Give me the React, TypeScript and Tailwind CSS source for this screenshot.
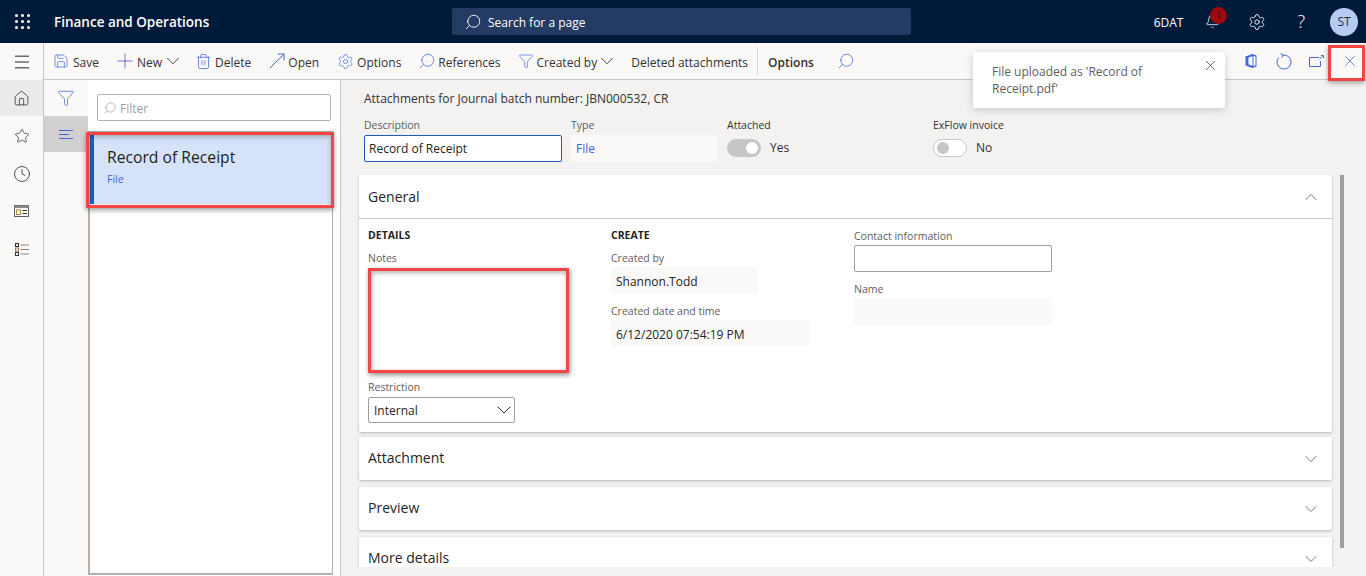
import React from "react";
import {
  Save,
  Plus,
  ChevronDown,
  ChevronUp,
  Trash2,
  MoveUpRight,
  Settings,
  Search,
  Funnel,
  Home,
  Star,
  Clock,
  X,
  Bell,
  Menu,
} from "lucide-react";

const BLUE = "#4468d8";

function Tool({ icon, label, chevron, bold, gap = "gap-[6px]" }: { icon?: React.ReactNode; label: string; chevron?: boolean; bold?: boolean; gap?: string }) {
  return (
    <div className={`flex items-center h-full px-[9.5px] shrink-0 ${gap}`}>
      {icon}
      <span className={`pt-[3px] ${bold ? "font-semibold" : ""}`}>{label}</span>
      {chevron && (
        <span className="w-[11px] flex justify-center ml-0">
          <ChevronDown size={22} strokeWidth={1} className="shrink-0 text-[#323130]" />
        </span>
      )}
    </div>
  );
}

function Label({ children, dark }: { children: React.ReactNode; dark?: boolean }) {
  return <div className={`text-[10.5px] leading-[15px] h-[15px] ${dark ? "text-[#323130]" : "text-[#605e5c]"}`}>{children}</div>;
}

function Collapsed({ title }: { title: string }) {
  return (
    <div className="h-[43px] shrink-0 bg-white rounded-[2px] shadow-[0_1px_3px_rgba(0,0,0,0.25)] flex items-center justify-between pl-[9px] pr-[11px] mb-[7px]">
      <span className="text-[14px] font-medium text-[#252423] pb-[2px]">{title}</span>
      <ChevronDown size={20} strokeWidth={1} className="text-[#605e5c]" />
    </div>
  );
}

function Toggle({ on, label }: { on: boolean; label: string }) {
  return (
    <div className="flex items-center gap-[9px] h-[27px] mt-[1px]">
      <div className={`w-[34px] h-[18px] rounded-full flex items-center px-[3px] ${on ? "bg-[#c8c6c4] justify-end" : "bg-white border border-[#c8c6c4] justify-start"}`}>
        <div className={`w-[12px] h-[12px] rounded-full ${on ? "bg-white" : "bg-[#c8c6c4]"}`} />
      </div>
      <span className="text-[12px] text-[#323130]">{label}</span>
    </div>
  );
}

function OfficeIcon() {
  return (
    <svg width="14" height="16" viewBox="0 0 14 16" fill="none">
      <path d="M1.5 3.5 8.5 1 12.5 2.5V13.5L8.5 15 1.5 12.5Z" fill={BLUE} />
      <path d="M4.5 4.5 8.5 3.2V12.8L4.5 11.5Z" fill="#fff" />
      <path d="M9.5 3 11.5 3.5V12.5L9.5 13Z" fill="#fff" />
    </svg>
  );
}

function RefreshIcon() {
  return (
    <svg width="16" height="17" viewBox="0 0 16 17" fill="none" stroke={BLUE} strokeWidth="1">
      <path d="M7 2.1A7 7 0 1 1 2.6 4.6" />
      <path d="M4.5 .5 7.2 2.1 5.8 4.6" />
    </svg>
  );
}

function PopoutIcon() {
  return (
    <svg width="15" height="12" viewBox="0 0 15 12" fill="none" stroke={BLUE} strokeWidth="1">
      <path d="M10 2.5H.5v9h11V6" />
      <path d="M10.5 4 13.5 1.5" />
      <path d="M12 .5h2.5V3" />
    </svg>
  );
}

function WorkspaceIcon() {
  return (
    <svg width="15" height="12" viewBox="0 0 15 12" fill="none">
      <rect x=".5" y=".5" width="14" height="11" stroke="#605e5c" />
      <rect x=".5" y=".5" width="14" height="2.5" fill="#8a8886" />
      <rect x="2.5" y="5" width="4" height="4.5" stroke="#b08a4a" />
      <path d="M8.5 5.5H13M8.5 8.5H13" stroke="#323130" />
    </svg>
  );
}

function ListIcon() {
  return (
    <svg width="14" height="13" viewBox="0 0 14 13" fill="none" stroke="#323130">
      <rect x=".5" y=".5" width="3" height="3" />
      <rect x=".5" y="5" width="3" height="3" stroke="#a07a3a" />
      <rect x=".5" y="9.5" width="3" height="3" />
      <path d="M5.5 2H14M5.5 6.5H14M5.5 11H14" stroke="#8a8886" />
    </svg>
  );
}

function WaffleIcon() {
  return (
    <div className="grid grid-cols-3 gap-[3px] w-[15px]">
      {[0, 1, 2, 3, 4, 5, 6, 7, 8].map((i) => (
        <div key={i} className="w-[3px] h-[3px] bg-white rounded-full" />
      ))}
    </div>
  );
}

export default function App() {
  return (
    <div className="relative w-[1366px] h-[576px] overflow-hidden flex flex-col bg-[#f3f2f1] font-['Open_Sans',sans-serif] text-[#252423]">
      {/* top bar */}
      <header className="h-[43px] shrink-0 bg-[#001a3a] flex items-center text-white">
        <div className="w-[44px] flex justify-center"><WaffleIcon /></div>
        <div className="w-[408px] pl-[10px] pt-[2px] text-[13.5px] font-semibold">Finance and Operations</div>
        <div className="w-[459px] h-[27px] bg-[#243c63] rounded-[2px] flex items-center pl-[12px] gap-[6px] text-[12px]">
          <Search size={18} strokeWidth={1.2} className="-scale-x-100" />
          <span className="pt-[3px]">Search for a page</span>
        </div>
        <div className="ml-auto flex items-center pr-[8px]">
          <span className="text-[12px] mr-[22px] pt-[2px]">6DAT</span>
          <div className="relative w-[16px] h-[16px] mr-[27px]">
            <Bell size={15} strokeWidth={1.2} />
            <div className="absolute -top-[7px] left-[5px] w-[17px] h-[17px] rounded-full bg-[#9c0a12] text-[10px] text-[#3b0d10] flex items-center justify-center">1</div>
          </div>
          <Settings size={18} strokeWidth={1.2} className="mr-[31px]" />
          <span className="text-[18px] font-light mr-[25px]">?</span>
          <div className="w-[28px] h-[28px] rounded-full bg-[#b7cbf2] text-[#1f2a44] text-[12px] flex items-center justify-center">ST</div>
        </div>
      </header>

      <div className="flex flex-1 min-h-0">
        {/* nav rail */}
        <nav className="w-[44px] shrink-0 bg-[#faf9f8] border-r border-[#c8c6c4] flex flex-col items-stretch">
          <div className="h-[37px] flex items-center justify-center"><Menu size={20} strokeWidth={1.2} className="text-[#252423]" /></div>
          <div className="h-[36px] bg-[#edebe9] flex items-center justify-center"><Home size={17} strokeWidth={1.1} className="text-[#323130]" /></div>
          <div className="h-[40px] flex items-center justify-center"><Star size={16} strokeWidth={1.1} className="text-[#323130]" /></div>
          <div className="h-[36px] flex items-center justify-center"><Clock size={18} strokeWidth={1.1} className="text-[#323130]" /></div>
          <div className="h-[38px] flex items-center justify-center"><WorkspaceIcon /></div>
          <div className="h-[38px] flex items-center justify-center"><ListIcon /></div>
        </nav>

        <div className="flex-1 min-w-0 flex flex-col">
          {/* action pane */}
          <div className="h-[37px] shrink-0 bg-[#faf9f8] border-b border-[#c8c6c4] flex items-center pl-[1.5px] text-[12px] text-[#323130]">
            <Tool icon={<span className="w-[12px] flex justify-center"><Save size={16} strokeWidth={1.1} color={BLUE} className="shrink-0" /></span>} label="Save" />
            <Tool gap="gap-[5px]" icon={<span className="w-[14px] flex justify-center"><Plus size={24} strokeWidth={1} color="#7a6fd0" className="shrink-0" /></span>} label="New" chevron />
            <Tool icon={<span className="w-[12px] flex justify-center"><Trash2 size={17} strokeWidth={1.1} color={BLUE} className="shrink-0" /></span>} label="Delete" />
            <Tool gap="gap-[4px]" icon={<span className="w-[14px] flex justify-center"><MoveUpRight size={24} strokeWidth={1} color={BLUE} className="shrink-0" /></span>} label="Open" />
            <Tool gap="gap-[5px]" icon={<span className="w-[14px] flex justify-center"><Settings size={17} strokeWidth={1} color={BLUE} className="shrink-0" /></span>} label="Options" />
            <Tool gap="gap-[4px]" icon={<span className="w-[14px] flex justify-center"><Search size={18} strokeWidth={1} color={BLUE} className="-scale-x-100 shrink-0" /></span>} label="References" />
            <Tool gap="gap-[4px]" icon={<span className="w-[13px] flex justify-center"><Funnel size={16} strokeWidth={1} color={BLUE} className="shrink-0" /></span>} label="Created by" chevron />
            <Tool label="Deleted attachments" />
            <div className="w-px h-[28px] bg-[#d2d0ce] mx-[-1px]" />
            <div className="w-[2px]" />
            <Tool label="Options" bold />
            <Search size={18} strokeWidth={1} color={BLUE} className="-scale-x-100 ml-[14px]" />
            <div className="ml-auto flex items-center">
              <div className="w-[33px] flex justify-center"><OfficeIcon /></div>
              <div className="w-[33px] flex justify-center"><RefreshIcon /></div>
              <div className="w-[33px] flex justify-center"><PopoutIcon /></div>
              <div className="w-[33px] flex justify-center"><X size={18} strokeWidth={1} color={BLUE} /></div>
            </div>
          </div>

          <div className="flex flex-1 min-h-0">
            {/* filter pane tabs */}
            <div className="w-[44px] shrink-0 bg-[#faf9f8] flex flex-col">
              <div className="h-[36px] flex items-center justify-center"><Funnel size={18} strokeWidth={1} color={BLUE} /></div>
              <div className="h-[36px] bg-[#d2d0ce] flex items-center justify-center">
                <svg width="15" height="11" viewBox="0 0 15 11" stroke={BLUE} strokeWidth="1"><path d="M0 1.5H14M0 5.5H10M0 9.5H14" /></svg>
              </div>
            </div>

            {/* list */}
            <aside className="w-[253px] shrink-0 bg-white border-r border-[#c8c6c4] flex flex-col pb-px">
              <div className="pl-[9px] pr-[9px] pt-[14px] pb-[10px]">
                <div className="h-[27px] border border-[#b3b0ad] rounded-[2px] flex items-center pl-[5px] gap-[3px] text-[12px] text-[#a19f9d]">
                  <Search size={14} strokeWidth={1} className="-scale-x-100 text-[#8a8886]" />
                  <span className="pt-[2px]">Filter</span>
                </div>
              </div>
              <div className="flex-1 mr-[7px] border-2 border-r border-t border-[#b3b0ad] border-l-[#b3b0ad] pt-[2px]">
                <div className="h-[70px] bg-[#d5e2f8] border-l-4 border-[#1f5bc4] pl-[13px] pt-[13px]">
                  <div className="text-[15.7px] leading-[20px] font-medium text-[#201f1e]">Record of Receipt</div>
                  <div className="text-[10.5px] leading-[14px] mt-[5px] text-[#3f63d6]">File</div>
                </div>
              </div>
            </aside>

            {/* details */}
            <main className="flex-1 min-w-0 relative pl-[18px] pr-[34px] pb-[9px] flex flex-col overflow-hidden">
              <div className="pl-[5px] h-[38px] pt-[11px] text-[12px] leading-[16px] text-[#323130]">Attachments for Journal batch number: JBN000532, CR</div>
              <div className="pl-[5px] h-[57px] flex shrink-0">
                <div className="w-[207px]">
                  <Label>Description</Label>
                  <div className="w-[198px] h-[27px] mt-[2px] bg-white border border-[#1f5bc4] rounded-[2px] px-[4px] flex items-center text-[12px]">Record of Receipt</div>
                </div>
                <div className="w-[156px]">
                  <Label>Type</Label>
                  <div className="w-[146px] h-[27px] mt-[2px] bg-[#faf9f8] px-[5px] flex items-center text-[12px] text-[#3f63d6]">File</div>
                </div>
                <div className="w-[206px]">
                  <Label dark>Attached</Label>
                  <Toggle on label="Yes" />
                </div>
                <div>
                  <Label dark>ExFlow invoice</Label>
                  <Toggle on={false} label="No" />
                </div>
              </div>

              <div className="flex-1 min-h-0 overflow-hidden -mx-[4px] px-[4px]">
                <div className="h-[257px] bg-white rounded-[2px] shadow-[0_1px_3px_rgba(0,0,0,0.25)] mb-[5px]">
                  <div className="h-[44px] border-b border-[#c8c6c4] flex items-center justify-between pl-[9px] pr-[11px]">
                    <span className="text-[14px] font-medium text-[#252423]">General</span>
                    <ChevronUp size={20} strokeWidth={1} className="text-[#605e5c]" />
                  </div>
                  <div className="flex pl-[9px] pt-[9px]">
                    <div className="w-[243px]">
                      <div className="text-[10.5px] leading-[15px] font-bold text-[#252423]">DETAILS</div>
                      <div className="mt-[8px]"><Label>Notes</Label></div>
                      <div className="w-[201px] h-[105px] mt-[2px] bg-white border-[3px] border-[#f44545] shadow-[1px_2px_5px_rgba(0,0,0,0.45),inset_1px_2px_5px_rgba(0,0,0,0.3)]" />
                      <div className="mt-[7px]"><Label>Restriction</Label></div>
                      <div className="w-[147px] h-[26px] mt-[2px] border border-[#a19f9d] rounded-[2px] flex items-center justify-between pl-[5px] text-[12px] text-[#252423]">
                        <span className="pt-px">Internal</span>
                        <ChevronDown size={24} strokeWidth={1} className="text-[#323130] -mr-[2px]" />
                      </div>
                    </div>
                    <div className="w-[243px]">
                      <div className="text-[10.5px] leading-[15px] font-bold text-[#252423]">CREATE</div>
                      <div className="mt-[8px]"><Label>Created by</Label></div>
                      <div className="w-[147px] h-[27px] mt-px bg-[#faf9f8] pl-[5px] pt-[2px] flex items-center text-[12px]">Shannon.Todd</div>
                      <div className="mt-[10px]"><Label>Created date and time</Label></div>
                      <div className="w-[198px] h-[27px] mt-px bg-[#faf9f8] pl-[5px] pt-[2px] flex items-center text-[12px]">6/12/2020 07:54:19 PM</div>
                    </div>
                    <div className="w-[198px] pt-px">
                      <Label>Contact information</Label>
                      <div className="h-[27px] mt-px bg-white border border-[#a19f9d] rounded-[2px]" />
                      <div className="mt-[10px]"><Label>Name</Label></div>
                      <div className="h-[27px] mt-px bg-[#faf9f8]" />
                    </div>
                  </div>
                </div>

                <Collapsed title="Attachment" />
                <Collapsed title="Preview" />
                <Collapsed title="More details" />
              </div>

              {/* scrollbar */}
              <div className="absolute right-[22px] top-[95px] w-[4px] h-[373px] bg-[#a19f9d] rounded-b-[1px]" />
            </main>
          </div>
        </div>
      </div>

      {/* notification toast */}
      <div className="absolute left-[973px] top-[52px] w-[252px] h-[56px] bg-white rounded-[2px] shadow-[0_2px_8px_rgba(0,0,0,0.18)] pl-[19px] pr-[36px] pt-[11px] text-[12px] leading-[17px] text-[#605e5c]">
        File uploaded as 'Record of Receipt.pdf'
        <X size={17} strokeWidth={1} className="absolute right-[6px] top-[5px] text-[#323130]" />
      </div>

      {/* annotation boxes */}
      <div className="absolute left-[86px] top-[132px] w-[248px] h-[76px] border-[3px] border-[#f44545] shadow-[0_2px_5px_rgba(0,0,0,0.4),inset_0_2px_5px_rgba(0,0,0,0.25)]" />
      <div className="absolute left-[1328px] top-[45px] w-[37px] h-[36px] border-[3px] border-[#f44545] shadow-[0_2px_5px_rgba(0,0,0,0.35)]" />
    </div>
  );
}
